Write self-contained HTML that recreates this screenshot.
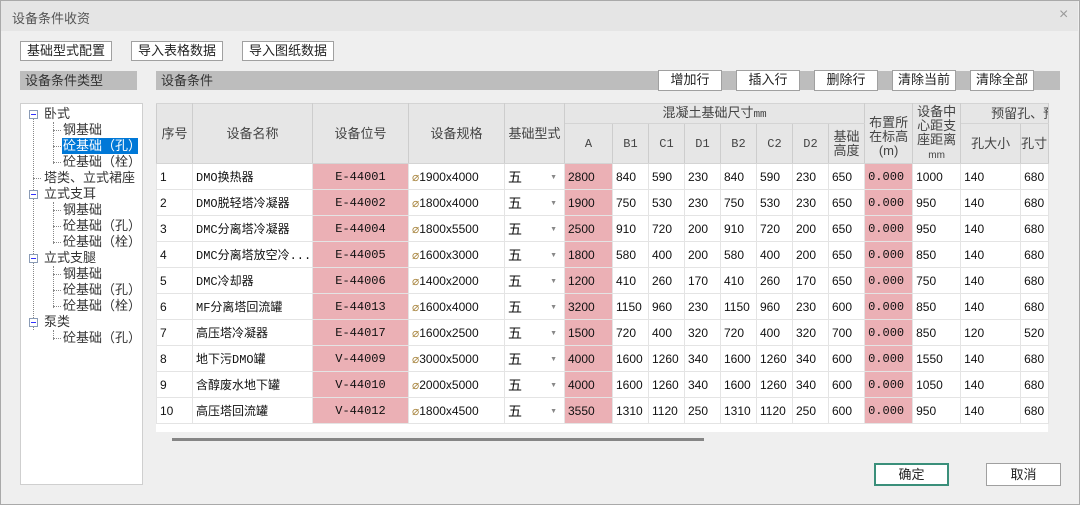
<!DOCTYPE html>
<html><head><meta charset="utf-8"><style>
*{box-sizing:border-box;margin:0;padding:0}
body{width:1080px;height:505px;overflow:hidden;background:#efefef;font-family:"Liberation Sans","Noto Sans CJK SC",sans-serif;font-size:12px;color:#111;position:relative}
.a{position:absolute}
.win{left:0;top:0;width:1080px;height:505px;border:1px solid #a9a9a9;background:#efefef}
.title{left:1px;top:1px;width:1077px;height:30px;background:#e5e5e5;color:#555;font-size:13px;padding:7px 0 0 11px}
.btn{background:#fff;border:1px solid #a0a0a0;text-align:center;font-size:13px;line-height:18px;color:#222}
.bar{background:#bdbdbd;font-size:13px;color:#333;padding:1px 0 0 5px;line-height:17px}
.tree{left:20px;top:103px;width:123px;height:382px;background:#fff;border:1px solid #cfcfcf}
.ti{position:absolute;font-size:13px;line-height:16px;color:#333;white-space:nowrap}
.bx{position:absolute;width:9px;height:9px;border:1px solid #8a9bb5;background:#fff}
.bx:after{content:"";position:absolute;left:1px;top:3px;width:5px;height:1px;background:#33f}
.dv{position:absolute;border-left:1px dotted #888}
.dh{position:absolute;border-top:1px dotted #888}
table{border-collapse:collapse;table-layout:fixed;position:absolute;left:156px;top:103px;width:892px;background:#fff}
td,th{border:1px solid #e4e4e4;white-space:nowrap;overflow:hidden;font-weight:normal}
th{background:#e6e6e6;border-color:#d4d4d4 #cdcdcd;color:#444;font-size:13px;line-height:14px}
th.s{font-size:12px;font-family:"Liberation Mono","Noto Sans CJK SC",monospace}
td{height:26px;padding:0 0 0 3px;font-size:12px;vertical-align:middle}
td.p{background:#ebb0b5}
td.c{text-align:center;font-family:"Liberation Mono",monospace;font-size:12px;padding:0}
td.m{font-family:"Liberation Mono","Noto Sans CJK SC",monospace;font-size:12px}
td.dd{font-size:14px;position:relative}
.dd span{position:absolute;right:7px;top:10px;color:#888;font-size:7px}
.ph{color:#aa8844}
</style></head><body>
<div class="a win"></div>
<div class="a title">设备条件收资</div>
<div class="a" style="left:1059px;top:6px;color:#9a9a9a;font-size:16px">×</div>
<div class="a btn" style="left:20px;top:41px;width:92px;height:20px">基础型式配置</div>
<div class="a btn" style="left:131px;top:41px;width:92px;height:20px">导入表格数据</div>
<div class="a btn" style="left:242px;top:41px;width:92px;height:20px">导入图纸数据</div>
<div class="a bar" style="left:20px;top:71px;width:117px;height:19px">设备条件类型</div>
<div class="a bar" style="left:156px;top:71px;width:904px;height:19px">设备条件</div>
<div class="a btn" style="left:658px;top:70px;width:64px;height:21px">增加行</div>
<div class="a btn" style="left:736px;top:70px;width:64px;height:21px">插入行</div>
<div class="a btn" style="left:814px;top:70px;width:64px;height:21px">删除行</div>
<div class="a btn" style="left:892px;top:70px;width:64px;height:21px">清除当前</div>
<div class="a btn" style="left:970px;top:70px;width:64px;height:21px">清除全部</div>
<div class="a tree"></div>
<div class="dv" style="left:33px;top:118px;height:212px"></div>
<div class="dv" style="left:53px;top:122px;height:42px"></div>
<div class="dv" style="left:53px;top:202px;height:42px"></div>
<div class="dv" style="left:53px;top:266px;height:42px"></div>
<div class="dv" style="left:53px;top:330px;height:10px"></div>
<div class="dh" style="left:53px;top:130px;width:8px"></div><div class="dh" style="left:53px;top:146px;width:8px"></div><div class="dh" style="left:53px;top:162px;width:8px"></div>
<div class="dh" style="left:33px;top:178px;width:8px"></div>
<div class="dh" style="left:53px;top:210px;width:8px"></div><div class="dh" style="left:53px;top:226px;width:8px"></div><div class="dh" style="left:53px;top:242px;width:8px"></div>
<div class="dh" style="left:53px;top:274px;width:8px"></div><div class="dh" style="left:53px;top:290px;width:8px"></div><div class="dh" style="left:53px;top:306px;width:8px"></div>
<div class="dh" style="left:53px;top:338px;width:8px"></div>
<div class="bx" style="left:29px;top:110px"></div><div class="bx" style="left:29px;top:190px"></div><div class="bx" style="left:29px;top:254px"></div><div class="bx" style="left:29px;top:318px"></div>
<div class="ti" style="left:44px;top:106px">卧式</div>
<div class="ti" style="left:63px;top:122px">钢基础</div>
<div class="ti" style="left:62px;top:138px;background:#0078d7;color:#fff;width:76px;padding-left:1px">砼基础（孔）</div>
<div class="ti" style="left:63px;top:154px">砼基础（栓）</div>
<div class="ti" style="left:44px;top:170px">塔类、立式裙座</div>
<div class="ti" style="left:44px;top:186px">立式支耳</div>
<div class="ti" style="left:63px;top:202px">钢基础</div>
<div class="ti" style="left:63px;top:218px">砼基础（孔）</div>
<div class="ti" style="left:63px;top:234px">砼基础（栓）</div>
<div class="ti" style="left:44px;top:250px">立式支腿</div>
<div class="ti" style="left:63px;top:266px">钢基础</div>
<div class="ti" style="left:63px;top:282px">砼基础（孔）</div>
<div class="ti" style="left:63px;top:298px">砼基础（栓）</div>
<div class="ti" style="left:44px;top:314px">泵类</div>
<div class="ti" style="left:63px;top:330px">砼基础（孔）</div>

<div class="a" style="left:156px;top:103px;width:892px;height:345px;background:#fff"></div>
<div class="a" style="left:156px;top:432px;width:892px;height:16px;background:#efefef"></div>
<div class="a" style="left:172px;top:438px;width:532px;height:3px;background:#858585"></div>
<table>
<colgroup><col style="width:36px"><col style="width:120px"><col style="width:96px"><col style="width:96px"><col style="width:60px"><col style="width:48px"><col style="width:36px"><col style="width:36px"><col style="width:36px"><col style="width:36px"><col style="width:36px"><col style="width:36px"><col style="width:36px"><col style="width:48px"><col style="width:48px"><col style="width:60px"><col style="width:28px"></colgroup>
<tr style="height:20px"><th rowspan="2">序号</th><th rowspan="2">设备名称</th><th rowspan="2">设备位号</th><th rowspan="2">设备规格</th><th rowspan="2">基础型式</th><th colspan="8">混凝土基础尺寸<span style="font-family:'Liberation Mono';font-size:11px">mm</span></th><th rowspan="2" style="padding-top:6px">布置所<br>在标高<br>(m)</th><th rowspan="2">设备中<br>心距支<br>座距离<br><span style="font-size:10px">mm</span></th><th colspan="2" style="text-align:left;padding-left:30px">预留孔、预</th></tr>
<tr style="height:40px"><th class="s">A</th><th class="s">B1</th><th class="s">C1</th><th class="s">D1</th><th class="s">B2</th><th class="s">C2</th><th class="s">D2</th><th>基础<br>高度</th><th>孔大小</th><th style="text-align:left">孔寸</th></tr>
<tr><td>1</td><td class="m">DMO换热器</td><td class="p c">E-44001</td><td><span class="ph">⌀</span>1900x4000</td><td class="dd">五<span>▼</span></td><td class="p">2800</td><td>840</td><td>590</td><td>230</td><td>840</td><td>590</td><td>230</td><td>650</td><td class="p m">0.000</td><td>1000</td><td>140</td><td>680</td></tr>
<tr><td>2</td><td class="m">DMO脱轻塔冷凝器</td><td class="p c">E-44002</td><td><span class="ph">⌀</span>1800x4000</td><td class="dd">五<span>▼</span></td><td class="p">1900</td><td>750</td><td>530</td><td>230</td><td>750</td><td>530</td><td>230</td><td>650</td><td class="p m">0.000</td><td>950</td><td>140</td><td>680</td></tr>
<tr><td>3</td><td class="m">DMC分离塔冷凝器</td><td class="p c">E-44004</td><td><span class="ph">⌀</span>1800x5500</td><td class="dd">五<span>▼</span></td><td class="p">2500</td><td>910</td><td>720</td><td>200</td><td>910</td><td>720</td><td>200</td><td>650</td><td class="p m">0.000</td><td>950</td><td>140</td><td>680</td></tr>
<tr><td>4</td><td class="m">DMC分离塔放空冷...</td><td class="p c">E-44005</td><td><span class="ph">⌀</span>1600x3000</td><td class="dd">五<span>▼</span></td><td class="p">1800</td><td>580</td><td>400</td><td>200</td><td>580</td><td>400</td><td>200</td><td>650</td><td class="p m">0.000</td><td>850</td><td>140</td><td>680</td></tr>
<tr><td>5</td><td class="m">DMC冷却器</td><td class="p c">E-44006</td><td><span class="ph">⌀</span>1400x2000</td><td class="dd">五<span>▼</span></td><td class="p">1200</td><td>410</td><td>260</td><td>170</td><td>410</td><td>260</td><td>170</td><td>650</td><td class="p m">0.000</td><td>750</td><td>140</td><td>680</td></tr>
<tr><td>6</td><td class="m">MF分离塔回流罐</td><td class="p c">E-44013</td><td><span class="ph">⌀</span>1600x4000</td><td class="dd">五<span>▼</span></td><td class="p">3200</td><td>1150</td><td>960</td><td>230</td><td>1150</td><td>960</td><td>230</td><td>600</td><td class="p m">0.000</td><td>850</td><td>140</td><td>680</td></tr>
<tr><td>7</td><td class="m">高压塔冷凝器</td><td class="p c">E-44017</td><td><span class="ph">⌀</span>1600x2500</td><td class="dd">五<span>▼</span></td><td class="p">1500</td><td>720</td><td>400</td><td>320</td><td>720</td><td>400</td><td>320</td><td>700</td><td class="p m">0.000</td><td>850</td><td>120</td><td>520</td></tr>
<tr><td>8</td><td class="m">地下污DMO罐</td><td class="p c">V-44009</td><td><span class="ph">⌀</span>3000x5000</td><td class="dd">五<span>▼</span></td><td class="p">4000</td><td>1600</td><td>1260</td><td>340</td><td>1600</td><td>1260</td><td>340</td><td>600</td><td class="p m">0.000</td><td>1550</td><td>140</td><td>680</td></tr>
<tr><td>9</td><td class="m">含醇废水地下罐</td><td class="p c">V-44010</td><td><span class="ph">⌀</span>2000x5000</td><td class="dd">五<span>▼</span></td><td class="p">4000</td><td>1600</td><td>1260</td><td>340</td><td>1600</td><td>1260</td><td>340</td><td>600</td><td class="p m">0.000</td><td>1050</td><td>140</td><td>680</td></tr>
<tr><td>10</td><td class="m">高压塔回流罐</td><td class="p c">V-44012</td><td><span class="ph">⌀</span>1800x4500</td><td class="dd">五<span>▼</span></td><td class="p">3550</td><td>1310</td><td>1120</td><td>250</td><td>1310</td><td>1120</td><td>250</td><td>600</td><td class="p m">0.000</td><td>950</td><td>140</td><td>680</td></tr>
</table>
<div class="a btn" style="left:874px;top:463px;width:75px;height:23px;border:2px solid #3a8f7a;line-height:19px">确定</div>
<div class="a btn" style="left:986px;top:463px;width:75px;height:23px;line-height:21px">取消</div>
</body></html>
